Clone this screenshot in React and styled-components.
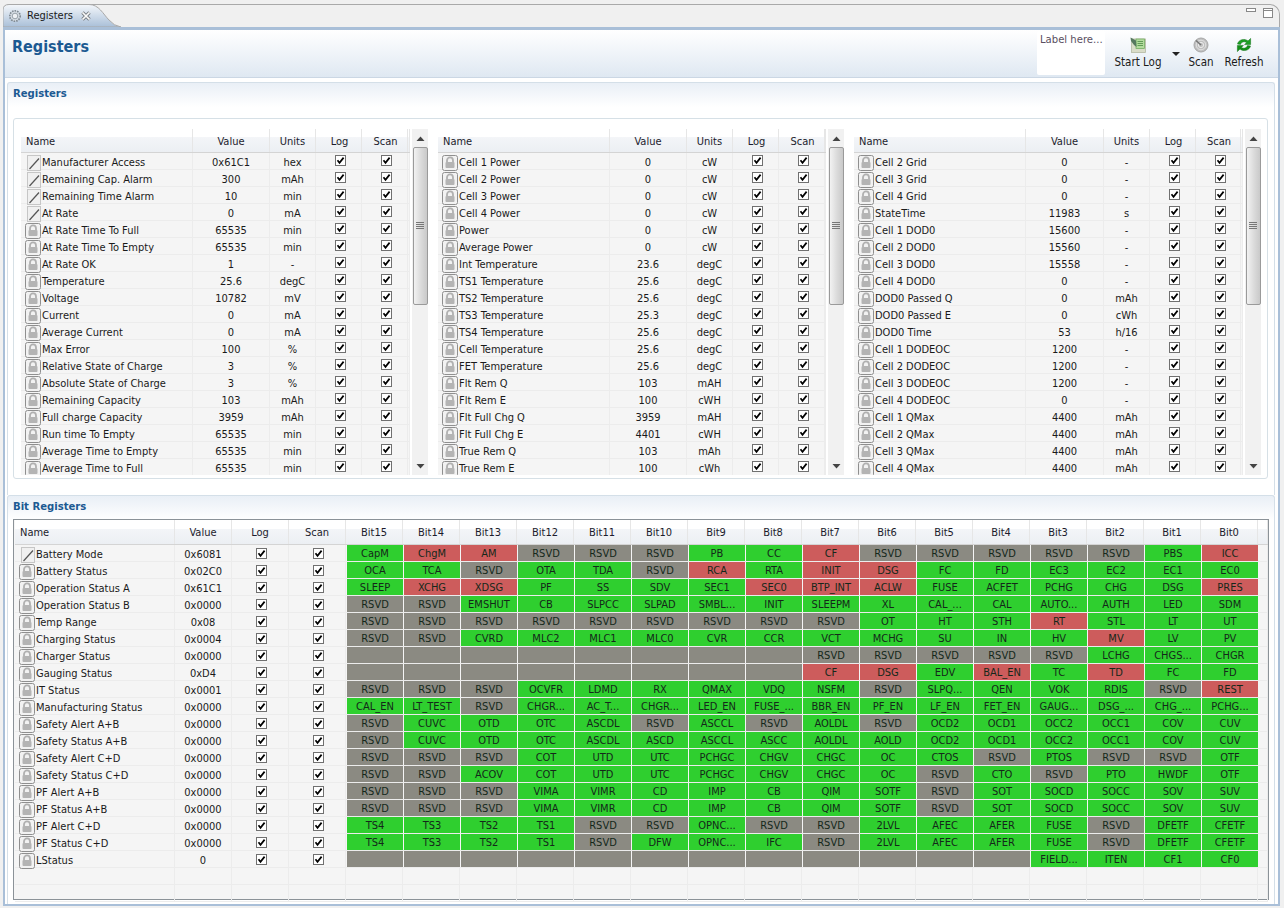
import React from 'react';
import styled, { createGlobalStyle } from 'styled-components';

const FONT = '"DejaVu Sans Condensed", "Noto Sans", sans-serif';

const Global = createGlobalStyle`
  html, body { margin: 0; padding: 0; background: #f0f0f0; }
  body { font-family: ${FONT}; font-size: 11px; color: #1a1a1a; }
  * { box-sizing: border-box; }
`;

const Page = styled.div`
  width: 1284px; height: 908px; overflow: hidden; background: #f0f0f0;
  display: flex; flex-direction: column; padding: 4px 4px 2px 3px;
`;
const TabStrip = styled.div`
  height: 23px; display: flex; justify-content: space-between; flex: none;
  background: #f0f0f0; border: 1px solid #a9a9a9; border-bottom: none; border-radius: 7px 10px 0 0;
`;
const Tab = styled.div`
  position: relative; width: 118px; height: 23px; margin: -1px 0 0 -1px; display: flex; align-items: center;
  padding-left: 5px; gap: 5px; font-size: 11px;
  & > span { position: relative; }
  & > svg { position: relative; }
`;
const TabShape = styled.svg`
  position: absolute !important; left: 0; top: 0;
`;
const TabLabel = styled.span`
  margin-right: 3px;
`;
const WinButtons = styled.div`
  display: flex; gap: 7px; padding: 3px 6px 0 0;
`;
const Body = styled.div`
  flex: 1; min-height: 0; background: #fff; border: 2px solid #a9bfd8; border-top-width: 3px;
  display: flex; flex-direction: column;
`;
const HeaderBar = styled.div`
  height: 48px; flex: none; display: flex; align-items: flex-start;
  background: linear-gradient(#ffffff, #dfe8f2); border-bottom: 1px solid #cbd7e4;
  padding: 1px 0 0 7px;
`;
const Title = styled.h1`
  margin: 4px 0 0; font-size: 16px; line-height: 24px; font-weight: bold; color: #1c5a92; flex: 1;
`;
const LabelBox = styled.div`
  width: 68px; height: 44px; background: #fff; border-radius: 2px; color: #5a4f5f; font-size: 11.2px;
  padding: 2px 0 0 3px; margin-right: 3px; white-space: nowrap;
`;
const Tool = styled.div`
  display: flex; flex-direction: column; align-items: center; font-size: 11.5px; width: ${p => p.$w}px;
  padding-top: 6px; gap: 2px; line-height: 15px; white-space: nowrap;
`;
const DropCaret = styled.div`
  width: 8px; height: 4px; flex: none; margin: 21px 3px 0 4px;
  border-left: 4px solid transparent; border-right: 4px solid transparent; border-top: 4px solid #222;
`;
const ToolEnd = styled.div`
  width: 9px; flex: none;
`;
const Section = styled.section`
  margin: ${p => p.$top}px 3px 0 2px; height: ${p => p.$h}px; flex: none;
  border: 1px solid #d4dfe8; border-bottom: none; border-radius: 3px 3px 0 0;
  display: flex; flex-direction: column;
  background: linear-gradient(#e9eff6 0, #ffffff 24px);
`;
const SectionTitle = styled.h2`
  margin: 0; padding: 2px 0 0 5px; height: 23px; font-size: 11.2px; line-height: 17px; font-weight: bold; color: #1c5a92;
`;
const RegPanel = styled.div`
  margin: 12px 6px 0 5px; height: 361px; border: 1px solid #d6e0e6; border-radius: 3px;
  padding: 10px 0 0 7px; display: flex; background: #fff;
`;
const TableWrap = styled.div`
  display: flex; width: ${p => p.$w}px; height: 346px; flex: none; overflow: hidden;
`;
const RegTable = styled.div`
  flex: none; width: ${p => p.$w}px; background: #f5f5f5;
`;
const HeadRow = styled.div`
  display: grid; grid-template-columns: ${p => p.$cols}; height: ${p => p.$h}px;
  background: linear-gradient(#ffffff 0, #ffffff 36%, #f3f5f8 37%, #eceff3 100%);
  border-bottom: 1px solid #d4d4d4; align-items: stretch;
`;
const HeadCell = styled.div`
  border-right: 1px solid #e6e6e6; display: flex; align-items: center; padding-top: 1px;
  justify-content: ${p => p.$left ? 'flex-start' : 'center'};
  padding-left: ${p => p.$left ? p.$left : 0}px; font-size: 11px; color: #1c1c2c;
`;
const HeadOffset = styled(HeadCell)`
  padding-left: 2px;
`;
const Row = styled.div`
  display: grid; grid-template-columns: ${p => p.$cols}; height: 17px; border-bottom: 1px solid #ececec;
`;
const Cell = styled.div`
  border-right: 1px solid #ececec; display: flex; align-items: center; justify-content: center;
  white-space: nowrap; overflow: hidden; font-size: 11px; line-height: 14px; padding-top: 2px;
`;
const NameCell = styled(Cell)`
  justify-content: flex-start; padding-left: ${p => p.$pad}px; gap: 1px; overflow: visible;
`;
const CheckCell = styled(Cell)`
  align-items: flex-start; padding: ${p => p.$top}px 0 0 ${p => p.$left}px;
`;
const Scrollbar = styled.div`
  width: 16px; margin-left: 2px; flex: none; height: 346px; background: #f1f1f1; display: flex; flex-direction: column; align-items: center;
`;
const ScrollBtn = styled.div`
  height: ${p => p.$h}px; flex: none; display: flex; align-items: center; justify-content: center; width: 100%;
`;
const ScrollTrack = styled.div`
  flex: 1;
`;
const Thumb = styled.div`
  width: 15px; height: 158px; flex: none; display: flex; align-items: center; justify-content: center;
  background: linear-gradient(90deg, #f2f2f2, #dadada 55%, #c9c9c9);
  border: 1px solid #9a9a9a; border-radius: 2px;
`;
const BitPanel = styled.div`
  margin: 0 6px 0 5px; width: 1256px; height: 381px; border: 1px solid #8b9298; background: #f5f5f5; padding: 0 0 0 1px;
`;
const BitCell = styled.div`
  height: 16px; font-size: 11px; line-height: 18px; text-align: center; white-space: nowrap; overflow: hidden;
  margin-left: 1px; color: #14281a;
  background: ${p => ({ g: '#2fcf2f', r: '#cd5c5c', n: '#8b8a82' })[p.$k]};
`;
const BitRow = styled.div`
  display: grid; grid-template-columns: 160px 57px 57px 57px repeat(16, 57px) 1fr; height: 17px; border-bottom: 1px solid #ececec;
`;
const IconBox = styled.span`
  display: inline-flex; width: 16px; height: 16px; flex: none;
`;
const CheckSvg = styled.svg`
  flex: none;
`;

function Check() {
  return (
    <CheckSvg width="11" height="11" viewBox="0 0 11 11">
      <rect x="0.5" y="0.5" width="10" height="10" fill="#fff" stroke="#707070" />
      <path d="M2.5 5.2 L4.5 7.8 L8.6 2.6" fill="none" stroke="#000" strokeWidth="1.7" />
    </CheckSvg>
  );
}
function Edit() {
  return (
    <IconBox>
      <svg width="16" height="16" viewBox="0 0 16 16">
        <rect x="2.5" y="0.5" width="13" height="15" fill="#f0f0f0" stroke="#c6c6c6" />
        <path d="M4.5 14 L14 3.5" stroke="#555" strokeWidth="1.2" />
      </svg>
    </IconBox>
  );
}
function Lock() {
  return (
    <IconBox>
      <svg width="16" height="16" viewBox="0 0 16 16">
        <rect x="0.5" y="0.5" width="15" height="15" rx="2" fill="#f2f2f2" stroke="#8f8f8f" />
        <path d="M5 7 V5.4 a3 3 0 0 1 6 0 V7" fill="none" stroke="#b0b0b0" strokeWidth="1.8" />
        <rect x="3.5" y="7" width="9" height="6" rx="1" fill="#b4b4b4" />
      </svg>
    </IconBox>
  );
}
const Up = () => <svg width="9" height="5" viewBox="0 0 9 5"><path d="M0.5 5 L4.5 0.5 L8.5 5Z" fill="#444" /></svg>;
const Down = () => <svg width="9" height="5" viewBox="0 0 9 5"><path d="M0.5 0 L4.5 4.5 L8.5 0Z" fill="#444" /></svg>;
const Grip = () => <svg width="8" height="8" viewBox="0 0 8 8"><path d="M0 .5H8M0 2.5H8M0 4.5H8M0 6.5H8" stroke="#777" /></svg>;

function Gear() {
  return (
    <svg width="14" height="14" viewBox="0 0 14 14">
      <circle cx="7" cy="7" r="5.2" fill="#d5dce3" stroke="#808a92" strokeDasharray="1.6 1" strokeWidth="1.6" />
      <circle cx="7" cy="7" r="2.8" fill="#eef1f4" stroke="#9aa3ab" />
    </svg>
  );
}
function CloseX() {
  return (
    <svg width="10" height="10" viewBox="0 0 10 10">
      <path d="M1.5 1.5 L8.5 8.5 M8.5 1.5 L1.5 8.5" stroke="#7a7f85" strokeWidth="3.4" />
      <path d="M1.5 1.5 L8.5 8.5 M8.5 1.5 L1.5 8.5" stroke="#fafafa" strokeWidth="1.7" />
    </svg>
  );
}
function LogIcon() {
  return (
    <svg width="16" height="16" viewBox="0 0 16 16">
      <rect x="1.5" y="2" width="14" height="13.5" fill="#d9dcc8" stroke="#b4b8a2" strokeWidth="0.8" />
      <rect x="6" y="2" width="8.5" height="9.5" fill="#b4dc9e" stroke="#6aa75a" strokeWidth="0.7" />
      <path d="M7.5 4.5H13M7.5 6.5H13M7.5 8.5H13" stroke="#4c8a45" strokeWidth="0.8" />
      <path d="M0.5 0.5 L6 3.5 L6.5 10 L4 8 L1 4Z" fill="#55785e" />
    </svg>
  );
}
function ScanIcon() {
  return (
    <svg width="16" height="16" viewBox="0 0 16 16">
      <circle cx="8" cy="8" r="7" fill="#c0c0c0" stroke="#a6a6a6" />
      <circle cx="8" cy="8" r="4.8" fill="none" stroke="#e2e2e2" />
      <circle cx="8" cy="8" r="2.6" fill="none" stroke="#ececec" />
      <path d="M8 8 L3 3.5" stroke="#767676" strokeWidth="1.6" />
    </svg>
  );
}
function RefreshIcon() {
  return (
    <svg width="16" height="16" viewBox="0 0 16 16">
      <path d="M1.5 7 C2.5 2.6 8.5 1 12 4 L14.6 1.4 V7.6 H8.6 L10.6 5.6 C8.4 4 5.4 4.8 4.5 7.4Z" fill="#1ea024" stroke="#0f6e14" strokeWidth="0.5" />
      <path d="M14.5 9 C13.5 13.4 7.5 15 4 12 L1.4 14.6 V8.4 H7.4 L5.4 10.4 C7.6 12 10.6 11.2 11.5 8.6Z" fill="#149018" stroke="#0f6e14" strokeWidth="0.5" />
    </svg>
  );
}

const REG_COLS = '172px 77px 46px 46px 46px 1fr';
const REG_COLS3 = '172px 78px 46px 46px 45px 1fr';

const L = (text) => text.split('|').map(s => {
  const [n, v, u, e] = s.split(';');
  return { n, v, u, e: e === 'e' };
});

const T1 = L('Manufacturer Access;0x61C1;hex;e|Remaining Cap. Alarm;300;mAh;e|Remaining Time Alarm;10;min;e|At Rate;0;mA;e|At Rate Time To Full;65535;min|At Rate Time To Empty;65535;min|At Rate OK;1;-|Temperature;25.6;degC|Voltage;10782;mV|Current;0;mA|Average Current;0;mA|Max Error;100;%|Relative State of Charge;3;%|Absolute State of Charge;3;%|Remaining Capacity;103;mAh|Full charge Capacity;3959;mAh|Run time To Empty;65535;min|Average Time to Empty;65535;min|Average Time to Full;65535;min');
const T2 = L('Cell 1 Power;0;cW|Cell 2 Power;0;cW|Cell 3 Power;0;cW|Cell 4 Power;0;cW|Power;0;cW|Average Power;0;cW|Int Temperature;23.6;degC|TS1 Temperature;25.6;degC|TS2 Temperature;25.6;degC|TS3 Temperature;25.3;degC|TS4 Temperature;25.6;degC|Cell Temperature;25.6;degC|FET Temperature;25.6;degC|Flt Rem Q;103;mAH|Flt Rem E;100;cWH|Flt Full Chg Q;3959;mAH|Flt Full Chg E;4401;cWH|True Rem Q;103;mAh|True Rem E;100;cWh');
const T3 = L('Cell 2 Grid;0;-|Cell 3 Grid;0;-|Cell 4 Grid;0;-|StateTime;11983;s|Cell 1 DOD0;15600;-|Cell 2 DOD0;15560;-|Cell 3 DOD0;15558;-|Cell 4 DOD0;0;-|DOD0 Passed Q;0;mAh|DOD0 Passed E;0;cWh|DOD0 Time;53;h/16|Cell 1 DODEOC;1200;-|Cell 2 DODEOC;1200;-|Cell 3 DODEOC;1200;-|Cell 4 DODEOC;0;-|Cell 1 QMax;4400;mAh|Cell 2 QMax;4400;mAh|Cell 3 QMax;4400;mAh|Cell 4 QMax;4400;mAh');

const R = 'n:RSVD';
const g = (s) => s.split(' ').map(x => 'g:' + x);
const E = 'n:';
const rep = (v, c) => Array(c).fill(v);

const BITS = [
  ['Battery Mode', '0x6081', true, ['g:CapM', 'r:ChgM', 'r:AM', R, R, R, 'g:PB', 'g:CC', 'r:CF', R, R, R, R, R, 'g:PBS', 'r:ICC']],
  ['Battery Status', '0x02C0', false, ['g:OCA', 'g:TCA', R, 'g:OTA', 'g:TDA', R, 'r:RCA', 'g:RTA', 'r:INIT', 'r:DSG', 'g:FC', 'g:FD', 'g:EC3', 'g:EC2', 'g:EC1', 'g:EC0']],
  ['Operation Status A', '0x61C1', false, ['g:SLEEP', 'r:XCHG', 'r:XDSG', 'g:PF', 'g:SS', 'g:SDV', 'g:SEC1', 'r:SEC0', 'r:BTP_INT', 'r:ACLW', 'g:FUSE', 'g:ACFET', 'g:PCHG', 'g:CHG', 'g:DSG', 'r:PRES']],
  ['Operation Status B', '0x0000', false, [R, R, ...g('EMSHUT CB SLPCC SLPAD SMBL... INIT SLEEPM XL CAL_... CAL AUTO... AUTH LED SDM')]],
  ['Temp Range', '0x08', false, [...rep(R, 9), 'g:OT', 'g:HT', 'g:STH', 'r:RT', 'g:STL', 'g:LT', 'g:UT']],
  ['Charging Status', '0x0004', false, [R, R, ...g('CVRD MLC2 MLC1 MLC0 CVR CCR VCT MCHG SU IN HV'), 'r:MV', 'g:LV', 'g:PV']],
  ['Charger Status', '0x0000', false, [...rep(E, 8), ...rep(R, 5), 'g:LCHG', 'g:CHGS...', 'g:CHGR']],
  ['Gauging Status', '0xD4', false, [...rep(E, 8), 'r:CF', 'r:DSG', 'g:EDV', 'r:BAL_EN', 'g:TC', 'r:TD', 'g:FC', 'g:FD']],
  ['IT Status', '0x0001', false, [R, R, R, ...g('OCVFR LDMD RX QMAX VDQ NSFM'), R, ...g('SLPQ... QEN VOK RDIS'), R, 'r:REST']],
  ['Manufacturing Status', '0x0000', false, ['g:CAL_EN', 'g:LT_TEST', R, ...g('CHGR... AC_T... CHGR... LED_EN FUSE_... BBR_EN PF_EN LF_EN FET_EN GAUG... DSG_... CHG_... PCHG...')]],
  ['Safety Alert A+B', '0x0000', false, [R, ...g('CUVC OTD OTC ASCDL'), R, 'g:ASCCL', R, 'g:AOLDL', R, ...g('OCD2 OCD1 OCC2 OCC1 COV CUV')]],
  ['Safety Status A+B', '0x0000', false, [R, ...g('CUVC OTD OTC ASCDL ASCD ASCCL ASCC AOLDL AOLD OCD2 OCD1 OCC2 OCC1 COV CUV')]],
  ['Safety Alert C+D', '0x0000', false, [R, R, R, ...g('COT UTD UTC PCHGC CHGV CHGC OC CTOS'), R, 'g:PTOS', R, R, 'g:OTF']],
  ['Safety Status C+D', '0x0000', false, [R, R, ...g('ACOV COT UTD UTC PCHGC CHGV CHGC OC'), R, 'g:CTO', R, ...g('PTO HWDF OTF')]],
  ['PF Alert A+B', '0x0000', false, [R, R, R, ...g('VIMA VIMR CD IMP CB QIM SOTF'), R, ...g('SOT SOCD SOCC SOV SUV')]],
  ['PF Status A+B', '0x0000', false, [R, R, R, ...g('VIMA VIMR CD IMP CB QIM SOTF'), R, ...g('SOT SOCD SOCC SOV SUV')]],
  ['PF Alert C+D', '0x0000', false, [...g('TS4 TS3 TS2 TS1'), R, R, 'g:OPNC...', R, R, ...g('2LVL AFEC AFER FUSE'), R, ...g('DFETF CFETF')]],
  ['PF Status C+D', '0x0000', false, [...g('TS4 TS3 TS2 TS1'), R, ...g('DFW OPNC... IFC'), R, ...g('2LVL AFEC AFER FUSE'), R, ...g('DFETF CFETF')]],
  ['LStatus', '0', false, [...rep(E, 12), ...g('FIELD... ITEN CF1 CF0')]],
];
const BIT_COLS = '160px 57px 57px 57px repeat(16, 57px) 1fr';

function RegisterTable({ rows, cols, width, total }) {
  return (
    <TableWrap $w={total}>
      <RegTable $w={width}>
        <HeadRow $cols={cols} $h={24}>
          <HeadCell $left={5}>Name</HeadCell>
          <HeadCell>Value</HeadCell>
          <HeadCell>Units</HeadCell>
          <HeadOffset>Log</HeadOffset>
          <HeadOffset>Scan</HeadOffset>
          <HeadCell />
        </HeadRow>
        {rows.map(r => (
          <Row key={r.n} $cols={cols}>
            <NameCell $pad={4}>{r.e ? <Edit /> : <Lock />}{r.n}</NameCell>
            <Cell>{r.v}</Cell>
            <Cell>{r.u}</Cell>
            <CheckCell $top={2} $left={4}><Check /></CheckCell>
            <CheckCell $top={2} $left={4}><Check /></CheckCell>
            <Cell />
          </Row>
        ))}
      </RegTable>
      <Scrollbar>
        <ScrollBtn $h={18}><Up /></ScrollBtn>
        <Thumb><Grip /></Thumb>
        <ScrollTrack />
        <ScrollBtn $h={18}><Down /></ScrollBtn>
      </Scrollbar>
    </TableWrap>
  );
}

export default function App() {
  return (
    <Page>
      <Global />
      <TabStrip>
        <Tab>
          <TabShape width="118" height="23" viewBox="0 0 118 23">
            <defs>
              <linearGradient id="tabg" x1="0" x2="0" y1="0" y2="1">
                <stop offset="0" stopColor="#f4f7fb" />
                <stop offset="1" stopColor="#a9bfd8" />
              </linearGradient>
            </defs>
            <path d="M0 23 V6 Q0 0.5 6 0.5 H86 C96 0.5 100 10 106 16 Q111 22 118 23Z" fill="url(#tabg)" stroke="#a9a9a9" />
          </TabShape>
          <Gear />
          <TabLabel>Registers</TabLabel>
          <CloseX />
        </Tab>
        <WinButtons>
          <svg width="10" height="4" viewBox="0 0 10 4"><rect x="0.5" y="0.5" width="9" height="3" fill="#fff" stroke="#888" /></svg>
          <svg width="10" height="10" viewBox="0 0 10 10"><rect x="0.5" y="0.5" width="9" height="9" fill="#fff" stroke="#888" /><path d="M0 2.5H10" stroke="#888" /></svg>
        </WinButtons>
      </TabStrip>
      <Body>
        <HeaderBar>
          <Title>Registers</Title>
          <LabelBox>Label here...</LabelBox>
          <Tool $w={60}><LogIcon />Start Log</Tool>
          <DropCaret />
          <Tool $w={36}><ScanIcon />Scan</Tool>
          <Tool $w={50}><RefreshIcon />Refresh</Tool>
          <ToolEnd />
        </HeaderBar>
        <Section $top={4} $h={413}>
          <SectionTitle>Registers</SectionTitle>
          <RegPanel>
            <RegisterTable rows={T1} cols={REG_COLS} width={389} total={417} />
            <RegisterTable rows={T2} cols={REG_COLS} width={388} total={416} />
            <RegisterTable rows={T3} cols={REG_COLS3} width={389} total={407} />
          </RegPanel>
        </Section>
        <Section $top={0} $h={409}>
          <SectionTitle>Bit Registers</SectionTitle>
          <BitPanel>
            <HeadRow $cols={BIT_COLS} $h={25}>
              <HeadCell $left={5}>Name</HeadCell>
              <HeadCell>Value</HeadCell>
              <HeadCell>Log</HeadCell>
              <HeadCell>Scan</HeadCell>
              {Array.from({ length: 16 }, (_, i) => <HeadCell key={i}>Bit{15 - i}</HeadCell>)}
              <HeadCell />
            </HeadRow>
            {BITS.map(([name, val, edit, cells]) => (
              <BitRow key={name}>
                <NameCell $pad={4}>{edit ? <Edit /> : <Lock />}{name}</NameCell>
                <Cell>{val}</Cell>
                <CheckCell $top={3} $left={3}><Check /></CheckCell>
                <CheckCell $top={3} $left={3}><Check /></CheckCell>
                {cells.map((c, i) => {
                  const [k, t] = c.split(':');
                  return <BitCell key={i} $k={k}>{t}</BitCell>;
                })}
                <Cell />
              </BitRow>
            ))}
            {[0, 1].map(i => (
              <BitRow key={i}>
                {Array.from({ length: 21 }, (_, j) => <Cell key={j} />)}
              </BitRow>
            ))}
          </BitPanel>
        </Section>
      </Body>
    </Page>
  );
}
